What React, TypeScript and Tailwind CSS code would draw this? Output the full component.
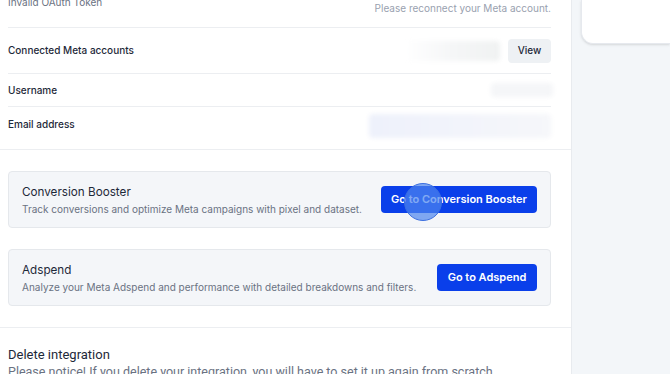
import React from "react";

const Blur = ({ className }: { className: string }) => (
  <div className={"blur-[2px] rounded " + className} />
);

export default function App() {
  return (
    <div
      className="relative flex h-[374px] w-[670px] overflow-hidden bg-[#f3f6f9]"
      style={{ fontFamily: "Inter, 'Noto Sans', sans-serif" }}
    >
      {/* Left panel */}
      <div className="w-[572px] shrink-0 border-r border-[#e8ebef] bg-white">
        <div className="ml-2 mr-[20px]">
          <div className="flex h-[27px] justify-between">
            <div className="-mt-[5px] text-[10px] leading-[14px] text-gray-500">Invalid OAuth Token</div>
            <div className="mt-[1px] text-[10px] leading-[14px] text-gray-400">Please reconnect your Meta account.</div>
          </div>
          <div className="border-t border-[#eceef1]" />
          <div className="flex h-[45px] items-center justify-between">
            <div className="text-[10px] font-medium text-gray-800">Connected Meta accounts</div>
            <div className="flex items-center gap-[8px]">
              <Blur className="h-[20px] w-[95px] bg-gradient-to-r from-white via-[#f5f6f7] to-[#f0f2f2]" />
              <div className="flex h-[24px] w-[43px] items-center justify-center rounded bg-[#eef1f4] text-[10px] font-medium text-gray-800">
                View
              </div>
            </div>
          </div>
          <div className="border-t border-[#eceef1]" />
          <div className="flex h-[32px] items-center justify-between">
            <div className="text-[10px] font-medium text-gray-800">Username</div>
            <Blur className="-mr-[2px] h-[14px] w-[62px] bg-[#f5f6f8]" />
          </div>
          <div className="border-t border-[#eceef1]" />
          <div className="flex h-[42px] items-start justify-between">
            <div className="pt-[10px] text-[10px] font-medium leading-[14px] text-gray-800">Email address</div>
            <Blur className="mt-[7px] h-[24px] w-[182px] bg-gradient-to-r from-[#eef1fb] via-[#f2f4fb] to-[#f6f7fa]" />
          </div>
        </div>
        <div className="border-t border-[#eceef1]" />

        <div className="flex flex-col gap-[21px] py-[21px] pl-2 pr-[20px]">
          <div className="flex h-[57px] items-center justify-between rounded border border-[#e5e8ec] bg-[#f4f6f9] px-[13px]">
            <div className="flex flex-col gap-[2px]">
              <div className="text-[11.7px] leading-[16px] text-gray-800">Conversion Booster</div>
              <div className="whitespace-nowrap text-[10px] leading-[14px] text-gray-500">
                Track conversions and optimize Meta campaigns with pixel and dataset.
              </div>
            </div>
            <div className="flex h-[27px] w-[156px] items-center justify-center rounded bg-[#0a3fea] text-[11px] font-semibold text-white">
              Go to Conversion Booster
            </div>
          </div>
          <div className="flex h-[57px] items-center justify-between rounded border border-[#e5e8ec] bg-[#f4f6f9] px-[13px]">
            <div className="flex flex-col gap-[2px]">
              <div className="text-[11.7px] leading-[16px] text-gray-800">Adspend</div>
              <div className="whitespace-nowrap text-[10px] leading-[14px] text-gray-500">
                Analyze your Meta Adspend and performance with detailed breakdowns and filters.
              </div>
            </div>
            <div className="flex h-[27px] w-[100px] items-center justify-center rounded bg-[#0a3fea] text-[11px] font-semibold text-white">
              Go to Adspend
            </div>
          </div>
        </div>
        <div className="border-t border-[#eceef1]" />
        <div
          className="flex flex-col gap-[2px] px-2 pt-[19px]"
          style={{ fontFamily: "Roboto, 'Noto Sans', sans-serif" }}
        >
          <div className="text-[13px] leading-[16px] text-gray-800">Delete integration</div>
          <div className="whitespace-nowrap text-[12.5px] leading-[14px] text-gray-500">
            Please notice! If you delete your integration, you will have to set it up again from scratch.
          </div>
        </div>
      </div>

      {/* Right side */}
      <div className="flex-1 pl-[9px]">
        <div className="h-[44px] rounded-bl-[12px] border-b border-l border-[#e6e9ee] bg-white shadow-sm" />
      </div>

      {/* click indicator */}
      <div className="absolute left-[404px] top-[183px] h-[38px] w-[38px] rounded-full border border-[#3b6fe0] bg-[#4d86ee]/70" />
    </div>
  );
}
